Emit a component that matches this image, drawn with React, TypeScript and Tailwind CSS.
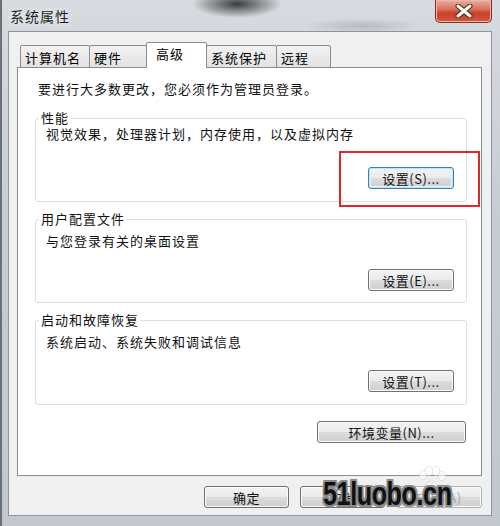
import type { ReactNode } from "react";
import clsx from "clsx";

const cjk = "font-['Noto_Sans_CJK_SC','Noto_Sans',sans-serif]";

function WinButton({
  children,
  className,
  focused,
  disabled,
}: {
  children: ReactNode;
  className?: string;
  focused?: boolean;
  disabled?: boolean;
}) {
  return (
    <button
      type="button"
      className={clsx(
        "h-[22px] flex items-center justify-center rounded-[3px] border text-[13px] leading-none tracking-[0.5px]",
        "bg-[linear-gradient(to_bottom,#f3f3f3_0%,#ebebeb_48%,#dcdcdc_52%,#cfcfcf_100%)]",
        focused
          ? "border-[#3c7fb1] shadow-[inset_0_0_0_1px_#bfe4f7,inset_0_0_0_2px_#e6f4fb]"
          : "border-[#707070] shadow-[inset_0_0_0_1px_#fbfbfb]",
        disabled ? "text-[#a3a3a3] border-[#adb2b5]" : "text-[#111]",
        className
      )}
    >
      {children}
    </button>
  );
}

function Group({
  title,
  desc,
  button,
  focused,
  className,
  descGap,
  btnGap,
  pb,
}: {
  title: string;
  desc: string;
  button: string;
  focused?: boolean;
  className?: string;
  descGap: string;
  btnGap: string;
  pb: string;
}) {
  return (
    <fieldset className={clsx("border border-[#d5dfe5] rounded-[3px] w-[432px]", pb, className)}>
      <legend className="ml-[3px] px-[2px] text-[13px] leading-[14px] tracking-[1px] text-[#111]">
        {title}
      </legend>
      <div className={clsx("pl-[10px] text-[13px] leading-[16px] tracking-[1px] text-[#111]", descGap)}>
        {desc}
      </div>
      <div className={clsx("flex justify-end pr-[12px]", btnGap)}>
        <WinButton className="w-[86px]" focused={focused}>
          {button}
        </WinButton>
      </div>
    </fieldset>
  );
}

function CloseButton() {
  return (
    <div className="mr-[8px] w-[57px] h-[23px] rounded-b-[5px] border border-t-0 border-[#7a3226] bg-[linear-gradient(to_bottom,#eab0a4_0%,#dc7560_40%,#c8412a_60%,#d2583d_100%)] shadow-[inset_0_0_0_1px_#f1b8a9] flex items-center justify-center">
      <svg width="18" height="14" viewBox="0 0 18 14">
        <path
          d="M3 2 L15 12 M15 2 L3 12"
          stroke="#4a2620"
          strokeWidth="5"
          strokeLinecap="round"
        />
        <path
          d="M3 2 L15 12 M15 2 L3 12"
          stroke="#ffffff"
          strokeWidth="3"
          strokeLinecap="round"
        />
      </svg>
    </div>
  );
}

const tabs = [
  { label: "计算机名", w: "w-[70px]" },
  { label: "硬件", w: "w-[58px]" },
  { label: "高级", w: "w-[61px]", active: true },
  { label: "系统保护", w: "w-[71px]" },
  { label: "远程", w: "w-[55px]" },
];

export default function App() {
  return (
    <div
      className={clsx(
        "relative w-[500px] h-[526px] overflow-hidden flex flex-col border-l-2 border-[#6c7076]",
        "bg-[radial-gradient(ellipse_45px_14px_at_235px_4px,#3b3b3b,transparent),radial-gradient(ellipse_60px_8px_at_360px_26px,#b7bcc2,transparent),linear-gradient(to_bottom,#d7dbe0,#c8cdd3_40%,#c3c8ce)]",
        cjk
      )}
    >
      {/* title bar */}
      <div className="h-[31px] flex justify-between items-start">
        <div className="pl-[8px] pt-[7px] text-[14px] leading-[18px] tracking-[1px] text-[#1c1c1c] [text-shadow:0_0_6px_#ffffff]">
          系统属性
        </div>
        <CloseButton />
      </div>

      {/* client area */}
      <div className="ml-[6px] w-[484px] h-[485px] border border-[#8e949b] bg-[#f0f0f0] pt-[10px] pl-[8px] flex flex-col">
        {/* tabs */}
        <div className="relative z-10 h-[26px] -mb-px pl-[3px] flex items-end">
          {tabs.map((t, i) =>
            t.active ? (
              <div
                key={t.label}
                className={clsx(
                  t.w,
                  i > 0 && "-ml-px",
                  "h-[26px] border border-b-0 border-[#898c95] rounded-t-[2px] bg-white pl-[9px] pt-[3px] text-[13px] leading-[16px] tracking-[1px]"
                )}
              >
                {t.label}
              </div>
            ) : (
              <div
                key={t.label}
                className={clsx(
                  t.w,
                  i > 0 && "-ml-px",
                  "h-[23px] border border-[#898c95] rounded-t-[2px] bg-[linear-gradient(to_bottom,#f3f3f3,#e2e2e2)] pl-[4px] pt-[4px] text-[13px] leading-[16px] tracking-[1px]"
                )}
              >
                {t.label}
              </div>
            )
          )}
        </div>

        {/* panel */}
        <div className="w-[465px] h-[409px] border border-[#898c95] bg-white pt-[13px] pl-[17px] flex flex-col">
          <div className="pl-[3px] text-[13px] leading-[16px] tracking-[1px] text-[#111]">
            要进行大多数更改，您必须作为管理员登录。
          </div>

          <Group
            className="mt-[14px]"
            title="性能"
            desc="视觉效果，处理器计划，内存使用，以及虚拟内存"
            button="设置(S)..."
            focused
            descGap="mt-[1px]"
            btnGap="mt-[25px]"
            pb="pb-[12px]"
          />
          <Group
            className="mt-[10px]"
            title="用户配置文件"
            desc="与您登录有关的桌面设置"
            button="设置(E)..."
            descGap="mt-[7px]"
            btnGap="mt-[20px]"
            pb="pb-[11px]"
          />
          <Group
            className="mt-[10px]"
            title="启动和故障恢复"
            desc="系统启动、系统失败和调试信息"
            button="设置(T)..."
            descGap="mt-[7px]"
            btnGap="mt-[20px]"
            pb="pb-[12px]"
          />

          <div className="mt-[16px] w-[432px] flex justify-end pr-px">
            <WinButton className="w-[149px]">环境变量(N)...</WinButton>
          </div>
        </div>

        {/* dialog buttons */}
        <div className="mt-[10px] w-[465px] flex justify-end gap-[11px]">
          <WinButton className="w-[85px]">确定</WinButton>
          <WinButton className="w-[85px]">取消</WinButton>
          <WinButton className="w-[86px]" disabled>
            应用(A)
          </WinButton>
        </div>
      </div>

      {/* red highlight */}
      <div className="absolute left-[337px] top-[151px] w-[141px] h-[56px] border-2 border-[#e3262b]" />

      {/* watermark paw */}
      <svg
        className="absolute left-[414px] top-[466px] opacity-60"
        width="30"
        height="28"
        viewBox="0 0 30 28"
      >
        <g fill="#ffffff" stroke="#d4d4d4" strokeWidth="1">
          <ellipse cx="7" cy="9" rx="3.5" ry="4.5" />
          <ellipse cx="13" cy="5" rx="3.5" ry="4.5" />
          <ellipse cx="20" cy="5" rx="3.5" ry="4.5" />
          <ellipse cx="26" cy="10" rx="3.5" ry="4.5" />
          <path d="M8 22 C8 14 22 14 23 22 C23 27 8 27 8 22 Z" />
        </g>
      </svg>

      {/* watermark */}
      <div className="absolute left-[321px] top-[476px] origin-left scale-x-[0.76] font-['Liberation_Sans',sans-serif] font-bold text-[33px] leading-[36px] tracking-[-0.5px] text-[#111] [text-shadow:2px_0_0_#8a8a8a,-2px_0_0_#8a8a8a,0_2px_0_#8a8a8a,0_-2px_0_#8a8a8a,2px_2px_0_#8a8a8a,-2px_-2px_0_#8a8a8a,2px_-2px_0_#8a8a8a,-2px_2px_0_#8a8a8a]">
        51luobo.cn
      </div>
    </div>
  );
}
